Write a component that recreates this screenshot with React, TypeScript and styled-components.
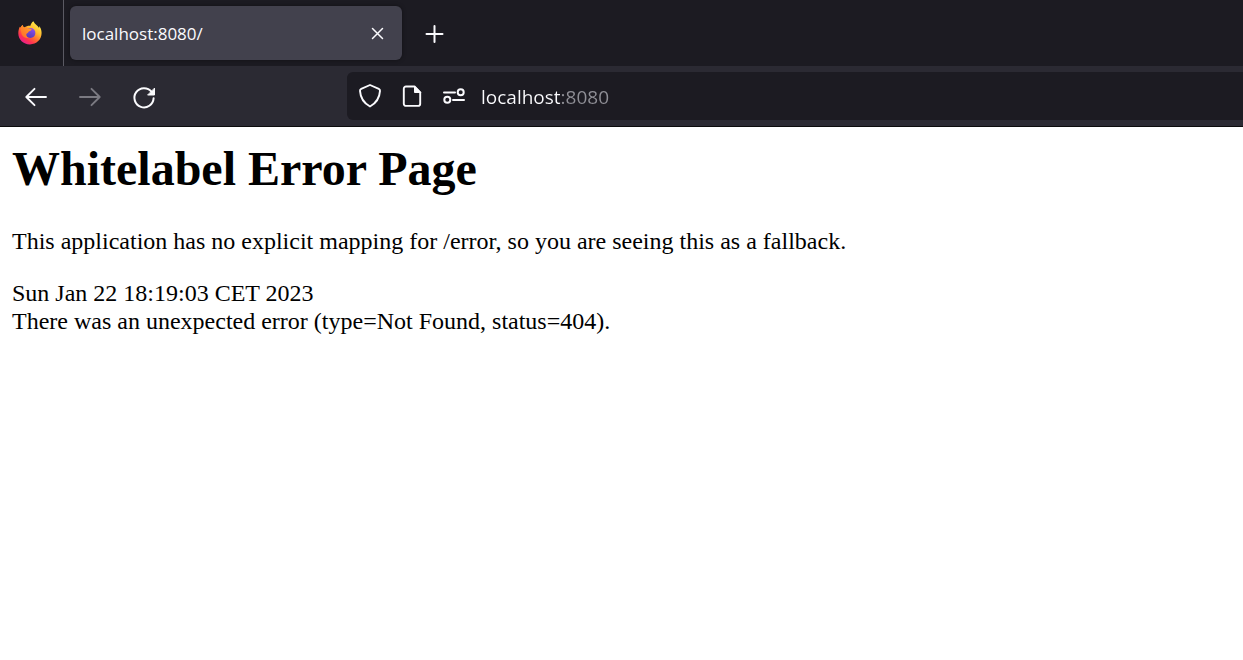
import React, { useState } from "react";
import styled, { createGlobalStyle } from "styled-components";

const GlobalStyle = createGlobalStyle`
  *, *::before, *::after { box-sizing: border-box; }
  body {
    margin: 0;
    background: #fff;
    color: #000;
    font-family: "Liberation Serif", "Times New Roman", serif;
    overflow-x: hidden;
  }
`;

const uiFont = `"Open Sans", "Noto Sans", sans-serif`;

const TabStrip = styled.header`
  display: flex;
  align-items: center;
  height: 66px;
  background: #1c1b22;
`;

const PinnedTab = styled.button`
  display: flex;
  align-items: center;
  align-self: stretch;
  width: 64px;
  padding: 0 0 0 17px;
  border: 0;
  border-right: 1px solid #5b5a63;
  background: transparent;
`;

const Tab = styled.div`
  display: flex;
  align-items: center;
  justify-content: space-between;
  width: 332px;
  height: 54px;
  margin-left: 6px;
  padding: 2px 12px 0;
  border-radius: 6px;
  background: #42414d;
  box-shadow: 0 0 4px rgba(0, 0, 0, 0.4);
`;

const TabTitle = styled.span`
  font: 17px/24px ${uiFont};
  color: #fbfbfe;
`;

const IconButton = styled.button<{ $size: number }>`
  display: flex;
  flex: none;
  align-items: center;
  justify-content: center;
  width: ${(p) => p.$size}px;
  height: ${(p) => p.$size}px;
  padding: 0;
  border: 0;
  border-radius: 6px;
  background: transparent;
  color: #fbfbfe;

  &:disabled { color: #7b7a82; }
`;

const NewTab = styled.div`
  margin-left: 8px;
`;

const Toolbar = styled.nav`
  display: flex;
  align-items: center;
  height: 61px;
  padding-left: 12px;
  border-bottom: 1px solid #0c0c0d;
  background: #2b2a33;
`;

const NavButtons = styled.div`
  display: flex;
  flex: none;
  gap: 6px;
  width: 335px;
`;

const AddressBar = styled.div`
  display: flex;
  flex: 1;
  align-items: center;
  min-width: 0;
  height: 48px;
  padding-left: 2px;
  border-radius: 6px 0 0 6px;
  background: #1c1b22;
`;

const AddressInput = styled.input`
  flex: 1;
  min-width: 0;
  height: 40px;
  margin-left: 6px;
  padding: 2px 0 0;
  border: 0;
  outline: 0;
  font: 19px/28px ${uiFont};
  color: #fbfbfe;
  caret-color: #fbfbfe;
  background: linear-gradient(to right, #fbfbfe 80px, #8f8f96 80px);
  background-clip: text;
  -webkit-background-clip: text;
  -webkit-text-fill-color: transparent;
`;

const Page = styled.main`
  padding: 15px 12px;
  font-size: 24px;
  line-height: 28px;
`;

const Title = styled.h1`
  margin: 0 0 31px;
  font-size: 48px;
  line-height: 54px;
  font-weight: 700;
`;

const Message = styled.p`
  margin: 0 0 24px;
`;

const Line = styled.div``;

const Drawing = styled.svg`
  display: block;
  overflow: visible;
`;

type StrokeProps = {
  size: number;
  width?: number;
  children: React.ReactNode;
};

const Stroke = ({ size, width = 2, children }: StrokeProps) => (
  <Drawing
    width={size}
    height={size}
    viewBox={`0 0 ${size} ${size}`}
    fill="none"
    stroke="currentColor"
    strokeWidth={width}
    strokeLinecap="round"
    strokeLinejoin="round"
    aria-hidden="true"
  >
    {children}
  </Drawing>
);

const FirefoxLogo = () => (
  <Drawing width="26" height="26" viewBox="0 0 26 26" aria-hidden="true">
    <defs>
      <linearGradient id="flame" x1="0.85" y1="0.1" x2="0.25" y2="0.95">
        <stop offset="0" stopColor="#fff14a" />
        <stop offset="0.35" stopColor="#ffb52e" />
        <stop offset="0.6" stopColor="#ff6b33" />
        <stop offset="0.8" stopColor="#ff3350" />
        <stop offset="1" stopColor="#e8208a" />
      </linearGradient>
      <linearGradient id="globe" x1="0.7" y1="0" x2="0.3" y2="1">
        <stop offset="0" stopColor="#8f4df0" />
        <stop offset="1" stopColor="#523cb4" />
      </linearGradient>
      <linearGradient id="head" x1="0" y1="1" x2="1" y2="0">
        <stop offset="0" stopColor="#ff6a2a" />
        <stop offset="1" stopColor="#ffa52a" />
      </linearGradient>
    </defs>
    <path
      d="M16.400 1.200c-1.400 1-2.700 2.700-3 4.600C11.200 5.600 9 6.200 7.400 7.400 6.200 6.900 5.800 6 5.900 4.900 4.700 5.500 3.900 6.500 3.400 7.800L2.800 6.800C1.800 8.800 1.300 11 1.300 13.200c0 6.300 5 11.200 11.600 11.200S24.600 19.500 24.600 13.100c0-2.800-.8-5.300-2.500-7 .1.700.1 1.400 0 2C20.700 5.200 17.600 4.200 16.400 1.200z"
      fill="url(#flame)"
    />
    <circle cx="13.400" cy="13" r="5" fill="url(#globe)" />
    <path
      d="M3.400 7.800C3.900 6.500 4.700 5.500 5.900 4.900 5.800 6 6.200 6.900 7.400 7.400c1.500-.2 2.700.1 3.700.9l3.500.6c.2 1.300-1 1.900-2.800 2.500-.4 1.300-2 1.500-2.400 2.700-.4 1.400.3 2.900 1.800 3.800-3.500.4-6.300-2-6.800-4.700z"
      fill="url(#head)"
    />
  </Drawing>
);

export default function App() {
  const [address, setAddress] = useState("localhost:8080");

  return (
    <>
      <GlobalStyle />
      <TabStrip>
        <PinnedTab type="button" aria-label="Firefox View">
          <FirefoxLogo />
        </PinnedTab>
        <Tab>
          <TabTitle>localhost:8080/</TabTitle>
          <IconButton type="button" aria-label="Close tab" $size={24}>
            <Stroke size={14} width={1.5}>
              <path d="M1.500 1.500l10 10M11.500 1.500l-10 10" />
            </Stroke>
          </IconButton>
        </Tab>
        <NewTab>
          <IconButton type="button" aria-label="New tab" $size={48}>
            <Stroke size={20}>
              <path d="M10.500 3v16M2.500 11h16" />
            </Stroke>
          </IconButton>
        </NewTab>
      </TabStrip>

      <Toolbar>
        <NavButtons>
          <IconButton type="button" aria-label="Back" $size={48}>
            <Stroke size={24} width={1.9}>
              <path d="M22 13H2.500M10.500 4.800L2.300 13l8.200 8.200" />
            </Stroke>
          </IconButton>
          <IconButton type="button" aria-label="Forward" disabled $size={48}>
            <Stroke size={24} width={1.9}>
              <path d="M2 13h19.500M13.500 4.800l8.200 8.200-8.200 8.200" />
            </Stroke>
          </IconButton>
          <IconButton type="button" aria-label="Reload" $size={48}>
            <Stroke size={24}>
              <path d="M19.600 7.900A9.600 9.600 0 1 0 21.600 14.300" />
              <path d="M22.500 4.500v6.500H16z" fill="currentColor" strokeWidth="1" />
            </Stroke>
          </IconButton>
        </NavButtons>
        <AddressBar>
          <IconButton type="button" aria-label="Tracking protection" $size={42}>
            <Stroke size={26} width={1.9}>
              <path d="M13 2L21.800 5.900c.9.400 1.300 1.100 1.200 2-.4 6.600-3.400 12-10 15.600C6.400 19.900 3.400 14.500 3 7.900c-.1-.9.300-1.600 1.200-2z" />
            </Stroke>
          </IconButton>
          <IconButton type="button" aria-label="Site information" $size={42}>
            <Stroke size={24} width={1.9}>
              <path d="M14.500 2.500H6A2.200 2.200 0 0 0 3.800 4.700v15A2.200 2.200 0 0 0 6 21.900h12a2.200 2.200 0 0 0 2.200-2.200V8.300z" />
              <path d="M14.500 2.500v6h6z" fill="currentColor" strokeWidth="1" />
            </Stroke>
          </IconButton>
          <IconButton type="button" aria-label="Permissions" $size={42}>
            <Stroke size={24}>
              <path d="M2 8.500h11M11 16h11" />
              <circle cx="18.700" cy="8.300" r="3" />
              <circle cx="5.300" cy="15.700" r="3" />
            </Stroke>
          </IconButton>
          <AddressInput
            aria-label="Address"
            spellCheck={false}
            value={address}
            onChange={(e) => setAddress(e.target.value)}
          />
        </AddressBar>
      </Toolbar>

      <Page>
        <Title>Whitelabel Error Page</Title>
        <Message>
          This application has no explicit mapping for /error, so you are seeing
          this as a fallback.
        </Message>
        <Line>Sun Jan 22 18:19:03 CET 2023</Line>
        <Line>There was an unexpected error (type=Not Found, status=404).</Line>
      </Page>
    </>
  );
}
